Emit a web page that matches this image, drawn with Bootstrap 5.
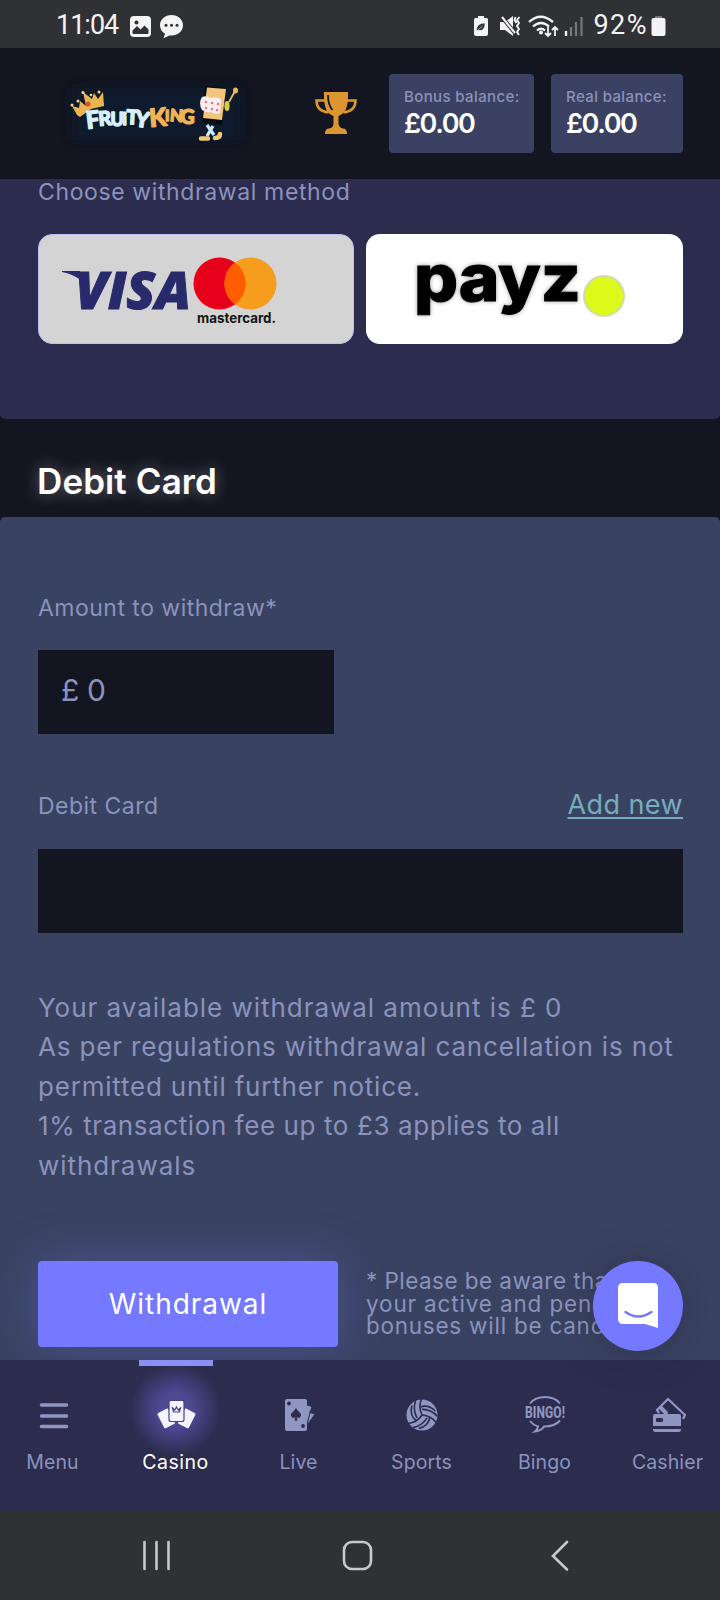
<!DOCTYPE html>
<html lang="en">
<head>
<meta charset="utf-8">
<meta name="viewport" content="width=device-width, initial-scale=1">
<title>Fruity King – Withdrawal</title>
<link rel="stylesheet" href="https://cdn.jsdelivr.net/npm/bootstrap@5.3.0/dist/css/bootstrap.min.css">
<style>
  body { background: #131520; color: #8b93bd; font-family: Inter, "Open Sans", sans-serif; height: 1600px; overflow: hidden; }
  svg { display: block; flex: none; overflow: visible; }
  .phone { width: 720px; height: 1600px; }
  .status-bar { height: 48px; background: #303135; color: #f4f4f5; padding: 3px 54px 0 56px; font: 27px/45px Roboto, sans-serif; }
  .clock { letter-spacing: -1px; }
  .notices { margin-left: 11px; }
  .charge { margin-left: 8px; letter-spacing: 1.5px; }
  .top-bar { height: 131px; padding: 0 37px 0 60px; }
  .balance { height: 79px; background: #3b4162; border-radius: 4px; padding: 14px 0 0 15px; }
  .balance-name { font-size: 15px; line-height: 17px; font-weight: 500; letter-spacing: .38px; }
  .balance-sum { font-size: 27px; line-height: 38px; font-weight: 600; color: #fff; letter-spacing: -1.4px; }
  .methods { height: 240px; padding: 1px 37px 0 38px; background: #2c2c4e; border-radius: 0 0 5px 5px; }
  .field-name { font-size: 23px; line-height: 24px; white-space: nowrap; letter-spacing: .48px; }
  .method { height: 110px; border-radius: 14px; background: #fff; }
  .method.active { background: #d4d4d4; border: 1px solid #b9bcf5; }
  .section-head { height: 98px; padding: 42px 37px 0; }
  .section-head h1 { font-size: 35px; line-height: 40px; font-weight: 600; color: #fff; text-shadow: 0 0 16px rgba(255,255,255,.4); letter-spacing: .1px; }
  .withdraw { height: 843px; padding: 79px 37px 0 38px; background: #3a4262; border-radius: 5px 5px 0 0; overflow: hidden; }
  .field { height: 84px; background: #131520; font-size: 30px; line-height: 81px; padding-left: 23px; letter-spacing: -.4px; }
  .add-new { font-size: 27px; line-height: 36px; color: #74aebd; text-underline-offset: 3px; text-decoration-thickness: 2px; letter-spacing: .42px; }
  .add-new:hover { color: #8cc; }
  .info { font-size: 26px; line-height: 39.4px; white-space: nowrap; }
  .l1 { letter-spacing: .97px; } .l2 { letter-spacing: .85px; } .l3 { letter-spacing: .79px; } .l4 { letter-spacing: .59px; } .l5 { letter-spacing: .95px; }
  .submit { width: 300px; height: 86px; background: #7479ff; color: #fff; font-size: 28px; letter-spacing: .95px; border: 0; border-radius: 4px; box-shadow: 0 0 50px rgba(116,121,255,.3); }
  .note { font-size: 22.5px; line-height: 22.6px; white-space: nowrap; }
  .n1 { letter-spacing: .45px; } .n2 { letter-spacing: .85px; } .n3 { letter-spacing: .75px; }
  .chat { position: absolute; left: 593px; top: 1261px; width: 90px; height: 90px; border-radius: 50%; background: #7479ff; box-shadow: 0 2px 40px rgba(20,21,32,.25); z-index: 3; }
  .tabs { height: 151px; background: #2c2c4e; overflow: hidden; }
  .tab { flex: 0 0 123px; font-size: 19.5px; line-height: 24px; padding-top: 35px; color: #8b93bd; text-decoration: none; letter-spacing: .1px; }
  .tab svg { margin: 0 auto 15px; }
  .tab.active { color: #fff; letter-spacing: .5px; background: linear-gradient(#8c8ff5, #8c8ff5) top center/74px 6px no-repeat, radial-gradient(circle at 50% 50px, #5450a0 0, #4b4890 18px, rgba(44,44,78,0) 46px); }
  .sys-bar { height: 89px; background: #303135; }
</style>
</head>
<body>
<div class="phone d-flex flex-column position-relative">

  <div class="status-bar d-flex align-items-center">
    <span class="clock">11:04</span>
    <svg class="notices me-auto" width="55" height="24" viewBox="128 14 55 24">
      <rect x="129" y="16" width="21" height="21" rx="4" fill="#f4f4f5"/><circle cx="135.500" cy="22.500" r="2" fill="#303135"/>
      <path d="M131.500 33v-2.500l4.500-4.500 3.500 3.500 4-4 4 4V33q0 1-1 1h-14q-1 0-1-1z" fill="#303135"/>
      <path d="M170.500 15c6.500 0 11.500 4.500 11.500 10.200S177 35.500 170.500 35.500h-2l-6 2.700 1.500-4.500c-3-1.800-5-4.800-5-8.500C159 19.500 164 15 170.500 15z" fill="#f4f4f5"/>
      <g fill="#303135"><circle cx="165" cy="25.300" r="1.500"/><circle cx="170.500" cy="25.300" r="1.500"/><circle cx="176" cy="25.300" r="1.500"/></g>
    </svg>
    <svg width="112" height="24" viewBox="471 14 112 24">
      <path d="M476 16h6v2h2.500q1.500 0 1.500 1.500V34q0 2-2 2h-10q-2 0-2-2V19.500q0-1.500 1.500-1.500H476z" fill="#f4f4f5"/>
      <path d="M474.500 31c0-6 3-7.500 8.500-8 0 6-2.500 8.500-7 7l-1.500 1zm2-1.500 4-3.500" fill="#303135" stroke="#f4f4f5" stroke-width=".6"/>
      <path d="M498 22h5l8-6v20l-8-6h-5z" fill="#f4f4f5"/>
      <path d="m499 16 14 17" stroke="#303135" stroke-width="4"/><path d="m500 17 13 16" stroke="#f4f4f5" stroke-width="2"/>
      <path d="m513.500 17-1 3 2 3M517.500 17l-2.500 3 2 3-2 3 2 3-2 3 2 3" stroke="#f4f4f5" stroke-width="1.900" fill="none"/>
      <path d="M527 22q11.500-10.500 24 0M531 26.500q8-7 16 0M535 30.500q4-3.500 8 0" stroke="#f4f4f5" stroke-width="2.300" fill="none"/><circle cx="539" cy="32.500" r="2" fill="#f4f4f5"/>
      <path d="M546 27v9m-3-3 3 3 3-3M553 36v-9m-3 3 3-3 3 3" stroke="#f4f4f5" stroke-width="1.800" fill="none"/>
      <path d="M564 31v5" stroke="#f4f4f5" stroke-width="2.400"/><path d="M569 27v9M574 22v14M579.500 17v19" stroke="#77787b" stroke-width="2.200"/>
    </svg>
    <span class="charge">92%</span>
    <svg style="margin-left:3px" width="15" height="22" viewBox="0 0 15 22"><path d="M4 1h7v3H4z" fill="#77787b"/><rect x=".5" y="3" width="14" height="18" rx="2" fill="#f4f4f5"/></svg>
  </div>

  <header class="top-bar d-flex align-items-center">
    <svg width="190" height="68" viewBox="60 80 190 68">
      <defs><filter id="soft" x="-20%" y="-30%" width="140%" height="160%"><feGaussianBlur stdDeviation="6"/></filter></defs>
      <rect x="72" y="88" width="168" height="52" fill="#0e1f30" filter="url(#soft)" opacity=".75"/>
      <path d="m72 106 7 2 1-7 6 5-3-14 9 7 2-6 4 6 5-7 1 14-13 3-11 8-3-2z" fill="#e8b552"/>
      <g fill="#f3d68e"><circle cx="72" cy="105" r="1.500"/><circle cx="78" cy="101" r="1.500"/><circle cx="83" cy="92.500" r="1.600"/><circle cx="91" cy="95" r="1.300"/><circle cx="99" cy="92" r="1.500"/></g><circle cx="88" cy="104" r="2.500" fill="#dc5020"/>
      <g font-family="Lato, sans-serif" font-weight="900" stroke-width="1.300" stroke-linejoin="round">
        <g fill="#d6f1fb" stroke="#d6f1fb">
          <text font-size="24" transform="translate(87 129) rotate(-7)">F</text>
          <text font-size="20" transform="translate(99 126) rotate(-5)">R</text>
          <text font-size="18" transform="translate(110.500 125.500)">U</text>
          <text font-size="17" transform="translate(122.500 125)">i</text>
          <text font-size="20" transform="translate(126 124) rotate(3)">T</text>
          <text font-size="22" transform="translate(134 126) rotate(9)">Y</text>
        </g>
        <g fill="#f0b355" stroke="#f0b355">
          <text font-size="25" transform="translate(150 127) rotate(-5)">K</text>
          <text font-size="15" transform="translate(165 121)">I</text>
          <text font-size="17" transform="translate(169.500 121) rotate(5)">N</text>
          <text font-size="20" transform="translate(180 123.500) rotate(2)">G</text>
        </g>
      </g>
      <path d="m205 86 21 2-4 37-20-3z" fill="#090b10"/><path d="m207 87.500 19 1.500-4 31-19-2z" fill="#f2c47c"/>
      <path d="M202 97q5-2 9 1 5-2 10 1l-1 14q-5 2-9-1-5 1-9-2-4-7 0-13z" fill="#f8eef0"/>
      <g fill="#de7185"><circle cx="206" cy="102" r="1.200"/><circle cx="212" cy="103" r="1.200"/><circle cx="218" cy="104" r="1.200"/><circle cx="206" cy="108" r="1.200"/><circle cx="212" cy="109" r="1.200"/><circle cx="217" cy="110" r="1.200"/></g>
      <ellipse cx="227" cy="106" rx="2.600" ry="5" fill="#dccb42"/><path d="m229 102 6-11" stroke="#e5bb61" stroke-width="1.800"/><ellipse cx="235.500" cy="90.500" rx="2.500" ry="3" fill="#e5bb61"/>
      <path d="m207 125 7 10m-1-9-6 10" stroke="#c9edfb" stroke-width="3.200"/><path d="M201 138.500h7M215 138q5 0 5-4" stroke="#eec976" stroke-width="4.500" stroke-linecap="round" fill="none"/>
    </svg>
    <svg style="margin-left:65px" width="42" height="44" viewBox="315 91 42 44">
      <path d="M324 91h24v5c0 11-3.500 17-9.500 19v8q1 4 4.500 4.500 4 0 4 5.500h-22q0-5.500 4-5.500 4-.5 4.500-4.500v-8c-6-2-9.500-8-9.500-19z" fill="#dd962f"/>
      <path d="M325 99.500h-8.500c0 7 4 11 12 12M347 99.500h8.500c0 7-4 11-12 12" fill="none" stroke="#dd962f" stroke-width="2.600"/>
      <path d="M328 94q0 10 4.500 15" fill="none" stroke="#131520" stroke-width="1.800"/>
    </svg>
    <div class="balance" style="width:145px;margin-left:32px"><div class="balance-name">Bonus balance:</div><div class="balance-sum">£0.00</div></div>
    <div class="balance ms-auto" style="width:132px"><div class="balance-name">Real balance:</div><div class="balance-sum">£0.00</div></div>
  </header>

  <section class="methods">
    <div class="field-name" style="letter-spacing:.62px">Choose withdrawal method</div>
    <div class="d-flex" style="margin-top:30px;gap:12px">
      <div class="method active flex-fill">
        <svg width="314" height="108" viewBox="39 235 314 108">
          <text x="75" y="308.500" font-family="Open Sans, sans-serif" font-style="italic" font-weight="800" font-size="52" fill="#292a6c" stroke="#292a6c" textLength="116" lengthAdjust="spacingAndGlyphs">VISA</text>
          <path d="M62 271h18l2 10q-9-7-20-9z" fill="#292a6c"/>
          <circle cx="219.500" cy="283.500" r="26" fill="#e7001b"/><circle cx="250.500" cy="283.500" r="26" fill="#f79d1d"/><path d="M235 262.500a26 26 0 0 1 0 42 26 26 0 0 1 0-42z" fill="#ff5d00"/>
          <text x="197" y="322.500" font-family="Inter, sans-serif" font-weight="700" font-size="14" fill="#151515" textLength="79" lengthAdjust="spacingAndGlyphs">mastercard.</text>
        </svg>
      </div>
      <div class="method flex-fill">
        <svg width="317" height="110" viewBox="366 234 317 110">
          <text x="414" y="301" font-family="Inter, sans-serif" font-weight="800" font-size="65" fill="#000" stroke="#000" stroke-width="1" textLength="167" lengthAdjust="spacingAndGlyphs" style="filter:drop-shadow(0 0 2px #999)">payz</text>
          <circle cx="604" cy="296" r="20" fill="#dcf91c" stroke="#d2d8b0" stroke-width="2"/>
        </svg>
      </div>
    </div>
  </section>

  <div class="section-head"><h1 class="m-0">Debit Card</h1></div>

  <main class="withdraw">
    <div class="field-name">Amount to withdraw*</div>
    <div class="field" style="width:296px;margin-top:30px">£ 0</div>
    <div class="d-flex justify-content-between align-items-baseline" style="margin-top:53px">
      <span class="field-name">Debit Card</span><a class="add-new" href="#">Add new</a>
    </div>
    <div class="field" style="margin-top:26px"></div>
    <p class="info mb-0" style="margin-top:55px"><span class="l1">Your available withdrawal amount is £ 0</span><br><span class="l2">As per regulations withdrawal cancellation is not</span><br><span class="l3">permitted until further notice.</span><br><span class="l4">1% transaction fee up to £3 applies to all</span><br><span class="l5">withdrawals</span></p>
    <div class="d-flex align-items-center" style="margin-top:76px">
      <button class="btn submit p-0" type="button">Withdrawal</button>
      <div class="note" style="margin-left:28px"><span class="n1">* Please be aware that</span><br><span class="n2">your active and pending</span><br><span class="n3">bonuses will be cancelled</span></div>
    </div>
  </main>

  <div class="chat d-flex align-items-center justify-content-center">
    <svg width="40" height="46" viewBox="0 0 40 46"><path d="M5 0h30q5 0 5 5v40l-13-4H5q-5 0-5-5V5q0-5 5-5z" fill="#fff"/><path d="M7.500 29q12.500 9 26 0" stroke="#7479ff" stroke-width="2.400" fill="none" stroke-linecap="round"/></svg>
  </div>

  <nav class="tabs d-flex justify-content-center text-center">
    <a class="tab" href="#"><svg width="40" height="40" viewBox="0 0 40 40"><path d="M8.500 10h25M8.500 21h25M8.500 31.500h25" stroke="#8f96c2" stroke-width="3.600" stroke-linecap="round"/></svg>Menu</a>
    <a class="tab active" href="#"><svg width="40" height="40" viewBox="0 0 40 40" fill="#f4f3ff"><rect x="4" y="15" width="12" height="17" rx="1.500" transform="rotate(-27 10 23)"/><rect x="25" y="15" width="12" height="17" rx="1.500" transform="rotate(27 31 23)"/><rect x="13" y="5.500" width="15" height="21" rx="2" stroke="#45427f" stroke-width="1.200"/><path d="m16.500 13 1 4h6l1-4-2.300 2-1.700-3-1.700 3z" fill="none" stroke="#45427f" stroke-width="1.200"/></svg>Casino</a>
    <a class="tab" href="#"><svg width="40" height="40" viewBox="0 0 40 40"><path d="m28 10 5 1.500-5 17M30 17l6 2-7 10" fill="#8f96c2" stroke="#2c2c4e"/><rect x="6" y="4" width="22" height="32" rx="2" fill="#8f96c2"/><path d="M17 13c2 4 6 5 5 8-1 2.500-4 2-4.500.5l1 4h-3l1-4c-.5 1.500-3.500 2-4.500-.5-1-3 3-4 5-8z" fill="#2c2c4e"/><circle cx="10" cy="8.500" r="1.900" fill="#2c2c4e"/><circle cx="24" cy="31" r="1.900" fill="#2c2c4e"/></svg>Live</a>
    <a class="tab" href="#"><svg width="40" height="40" viewBox="0 0 40 40"><circle cx="20" cy="20" r="15.500" fill="#8f96c2"/><g fill="none" stroke="#2c2c4e" stroke-width="1.600"><g id="seam"><path d="M20 20q-4-8-.5-16M18.300 12q8-3 15 4M13.500 6q-3 8 1.500 17"/></g><use href="#seam" transform="rotate(120 20 20)"/><use href="#seam" transform="rotate(240 20 20)"/></g></svg>Sports</a>
    <a class="tab" href="#"><svg width="40" height="40" viewBox="0 0 40 40"><path d="M5 8.500Q10 2 20 2t15 6.500M5 26q3 4 8 5.500-.5 3-3 5 7-1 9-5 11 0 16-6" fill="none" stroke="#8f96c2" stroke-width="2"/><text x="0" y="23" font-family="Roboto, sans-serif" font-weight="800" font-size="16.500" fill="#8f96c2" textLength="40" lengthAdjust="spacingAndGlyphs">BINGO!</text></svg>Bingo</a>
    <a class="tab" href="#"><svg width="40" height="40" viewBox="0 0 40 40"><path d="m11 18-2-3L20 4l17 16-2 4" fill="none" stroke="#8f96c2" stroke-width="2.300" stroke-linejoin="round"/><path d="m12 12 7 7" stroke="#8f96c2" stroke-width="4"/><path d="M7 19h24q2 0 2 2v10H5V21q0-2 2-2zM5 34h28q0 3-2 3H7q-2 0-2-3z" fill="#8f96c2"/><rect x="8" y="23" width="7" height="4" rx="1" fill="#2c2c4e"/></svg>Cashier</a>
  </nav>

  <footer class="sys-bar">
    <svg width="720" height="89" viewBox="0 1511 720 89" fill="none" stroke="#c9c9cb" stroke-width="2.600" stroke-linecap="round">
      <path d="M144.500 1542v27M156.500 1542v27M168.500 1542v27"/><rect x="344" y="1542" width="27" height="27" rx="8"/><path d="m567 1542-14 14 14 13.500"/>
    </svg>
  </footer>
</div>
<script src="https://cdn.jsdelivr.net/npm/bootstrap@5.3.0/dist/js/bootstrap.bundle.min.js"></script>
</body>
</html>
